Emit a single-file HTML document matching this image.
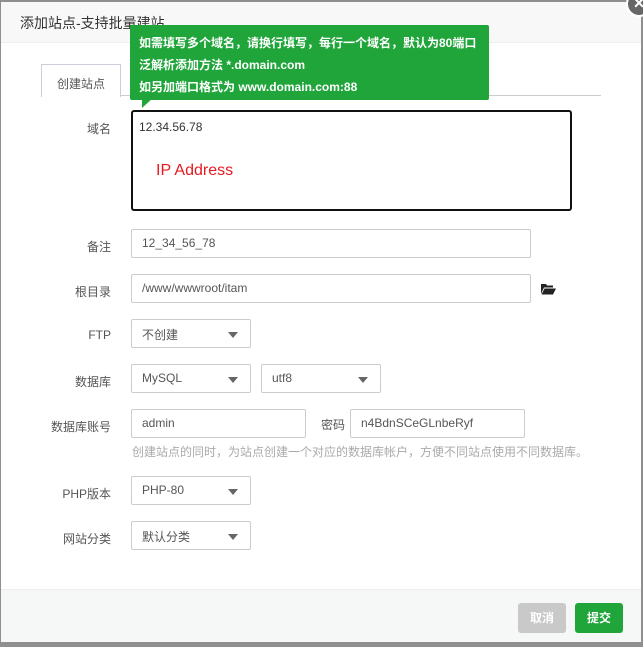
<!DOCTYPE html>
<html><head><meta charset="utf-8"><style>
*{box-sizing:border-box;margin:0;padding:0}
body{width:643px;height:647px;background:#8f8f8f;font-family:"Liberation Sans","Noto Sans CJK SC",sans-serif;font-size:12px;color:#555;position:relative;overflow:hidden}
.dlg{position:absolute;left:1px;top:0px;width:640px;height:642px;background:#fff;border-top:2px solid #8f8f8f}
.title{position:absolute;left:0;top:0;width:640px;height:41px;background:#f8f8f8;border-bottom:1px solid #eee;font-size:14px;color:#333;padding:11px 0 0 19px}
.close{position:absolute;left:625px;top:-11px;width:26px;height:26px;border-radius:50%;background:#666;border:2px solid #fff;color:#fff;font-size:18px;line-height:20px;text-align:center;font-weight:bold}
.abs{position:absolute}
.lbl{position:absolute;width:110px;text-align:right;font-size:12px;color:#555;left:0}
.inp{position:absolute;border:1px solid #ccc;border-radius:2px;height:29px;padding:6px 10px;font-size:12px;color:#555;background:#fff}
.sel::after{content:"";position:absolute;right:12px;top:12px;border-left:5px solid transparent;border-right:5px solid transparent;border-top:6px solid #666}
.foot{position:absolute;left:0;top:587px;width:640px;height:53px;background:#f6f8f8;border-top:1px solid #eee}
.btn{position:absolute;top:13px;height:30px;border-radius:3px;color:#fff;font-size:12px;font-weight:bold;text-align:center;line-height:30px}
.tip{position:absolute;left:129px;top:23px;width:359px;height:75px;background:#20a53a;color:#fff;font-size:12px;font-weight:bold;padding:7px 0 0 9px;line-height:22px;border-radius:2px}
</style></head><body>
<div class="dlg">
<div class="title">添加站点-支持批量建站</div>
<div class="close">×</div>
<div class="abs" style="left:119px;top:60px;width:481px;height:34px;border-bottom:1px solid #ccc"></div>
<div class="abs" style="left:40px;top:62px;width:80px;height:33px;background:#fff;border:1px solid #ccd;border-bottom:none;text-align:center;padding-top:10px;color:#555">创建站点</div>
<div class="lbl" style="top:118px">域名</div>
<div class="abs" style="left:130px;top:108px;width:441px;height:101px;border:2px solid #111;border-radius:3px;padding:8px 6px;color:#333">12.34.56.78
<div style="position:absolute;left:23px;top:50px;color:#e8191f;font-size:16px">IP Address</div></div>
<div class="lbl" style="top:236px">备注</div>
<div class="inp" style="left:130px;top:227px;width:400px">12_34_56_78</div>
<div class="lbl" style="top:281px">根目录</div>
<div class="inp" style="left:130px;top:272px;width:400px">/www/wwwroot/itam</div>
<svg class="abs" style="left:540px;top:281px" width="15" height="12" viewBox="0 0 15 12"><path d="M0 1h5l1 1.5h6v2H3L0 11z M3.5 5.5H15L12 11.5H0.5z" fill="#222"/></svg>
<div class="lbl" style="top:326px">FTP</div>
<div class="inp sel" style="left:130px;top:317px;width:120px">不创建</div>
<div class="lbl" style="top:371px">数据库</div>
<div class="inp sel" style="left:130px;top:362px;width:120px">MySQL</div>
<div class="inp sel" style="left:260px;top:362px;width:120px">utf8</div>
<div class="lbl" style="top:416px">数据库账号</div>
<div class="inp" style="left:130px;top:407px;width:175px">admin</div>
<div class="abs" style="left:320px;top:414px">密码</div>
<div class="inp" style="left:349px;top:407px;width:175px">n4BdnSCeGLnbeRyf</div>
<div class="abs" style="left:131px;top:441px;color:#aaa">创建站点的同时，为站点创建一个对应的数据库帐户，方便不同站点使用不同数据库。</div>
<div class="lbl" style="top:483px">PHP版本</div>
<div class="inp sel" style="left:130px;top:474px;width:120px">PHP-80</div>
<div class="lbl" style="top:528px">网站分类</div>
<div class="inp sel" style="left:130px;top:519px;width:120px">默认分类</div>
<div class="foot">
<div class="btn" style="left:517px;width:48px;background:#c9c9c9">取消</div>
<div class="btn" style="left:574px;width:48px;background:#20a53a">提交</div>
</div>
<div class="tip">如需填写多个域名，请换行填写，每行一个域名，默认为80端口<br>泛解析添加方法 *.domain.com<br>如另加端口格式为 www.domain.com:88</div>
<div class="abs" style="left:141px;top:96px;width:0;height:0;border-right:11px solid transparent;border-top:10px solid #20a53a"></div>
</div>
</body></html>
